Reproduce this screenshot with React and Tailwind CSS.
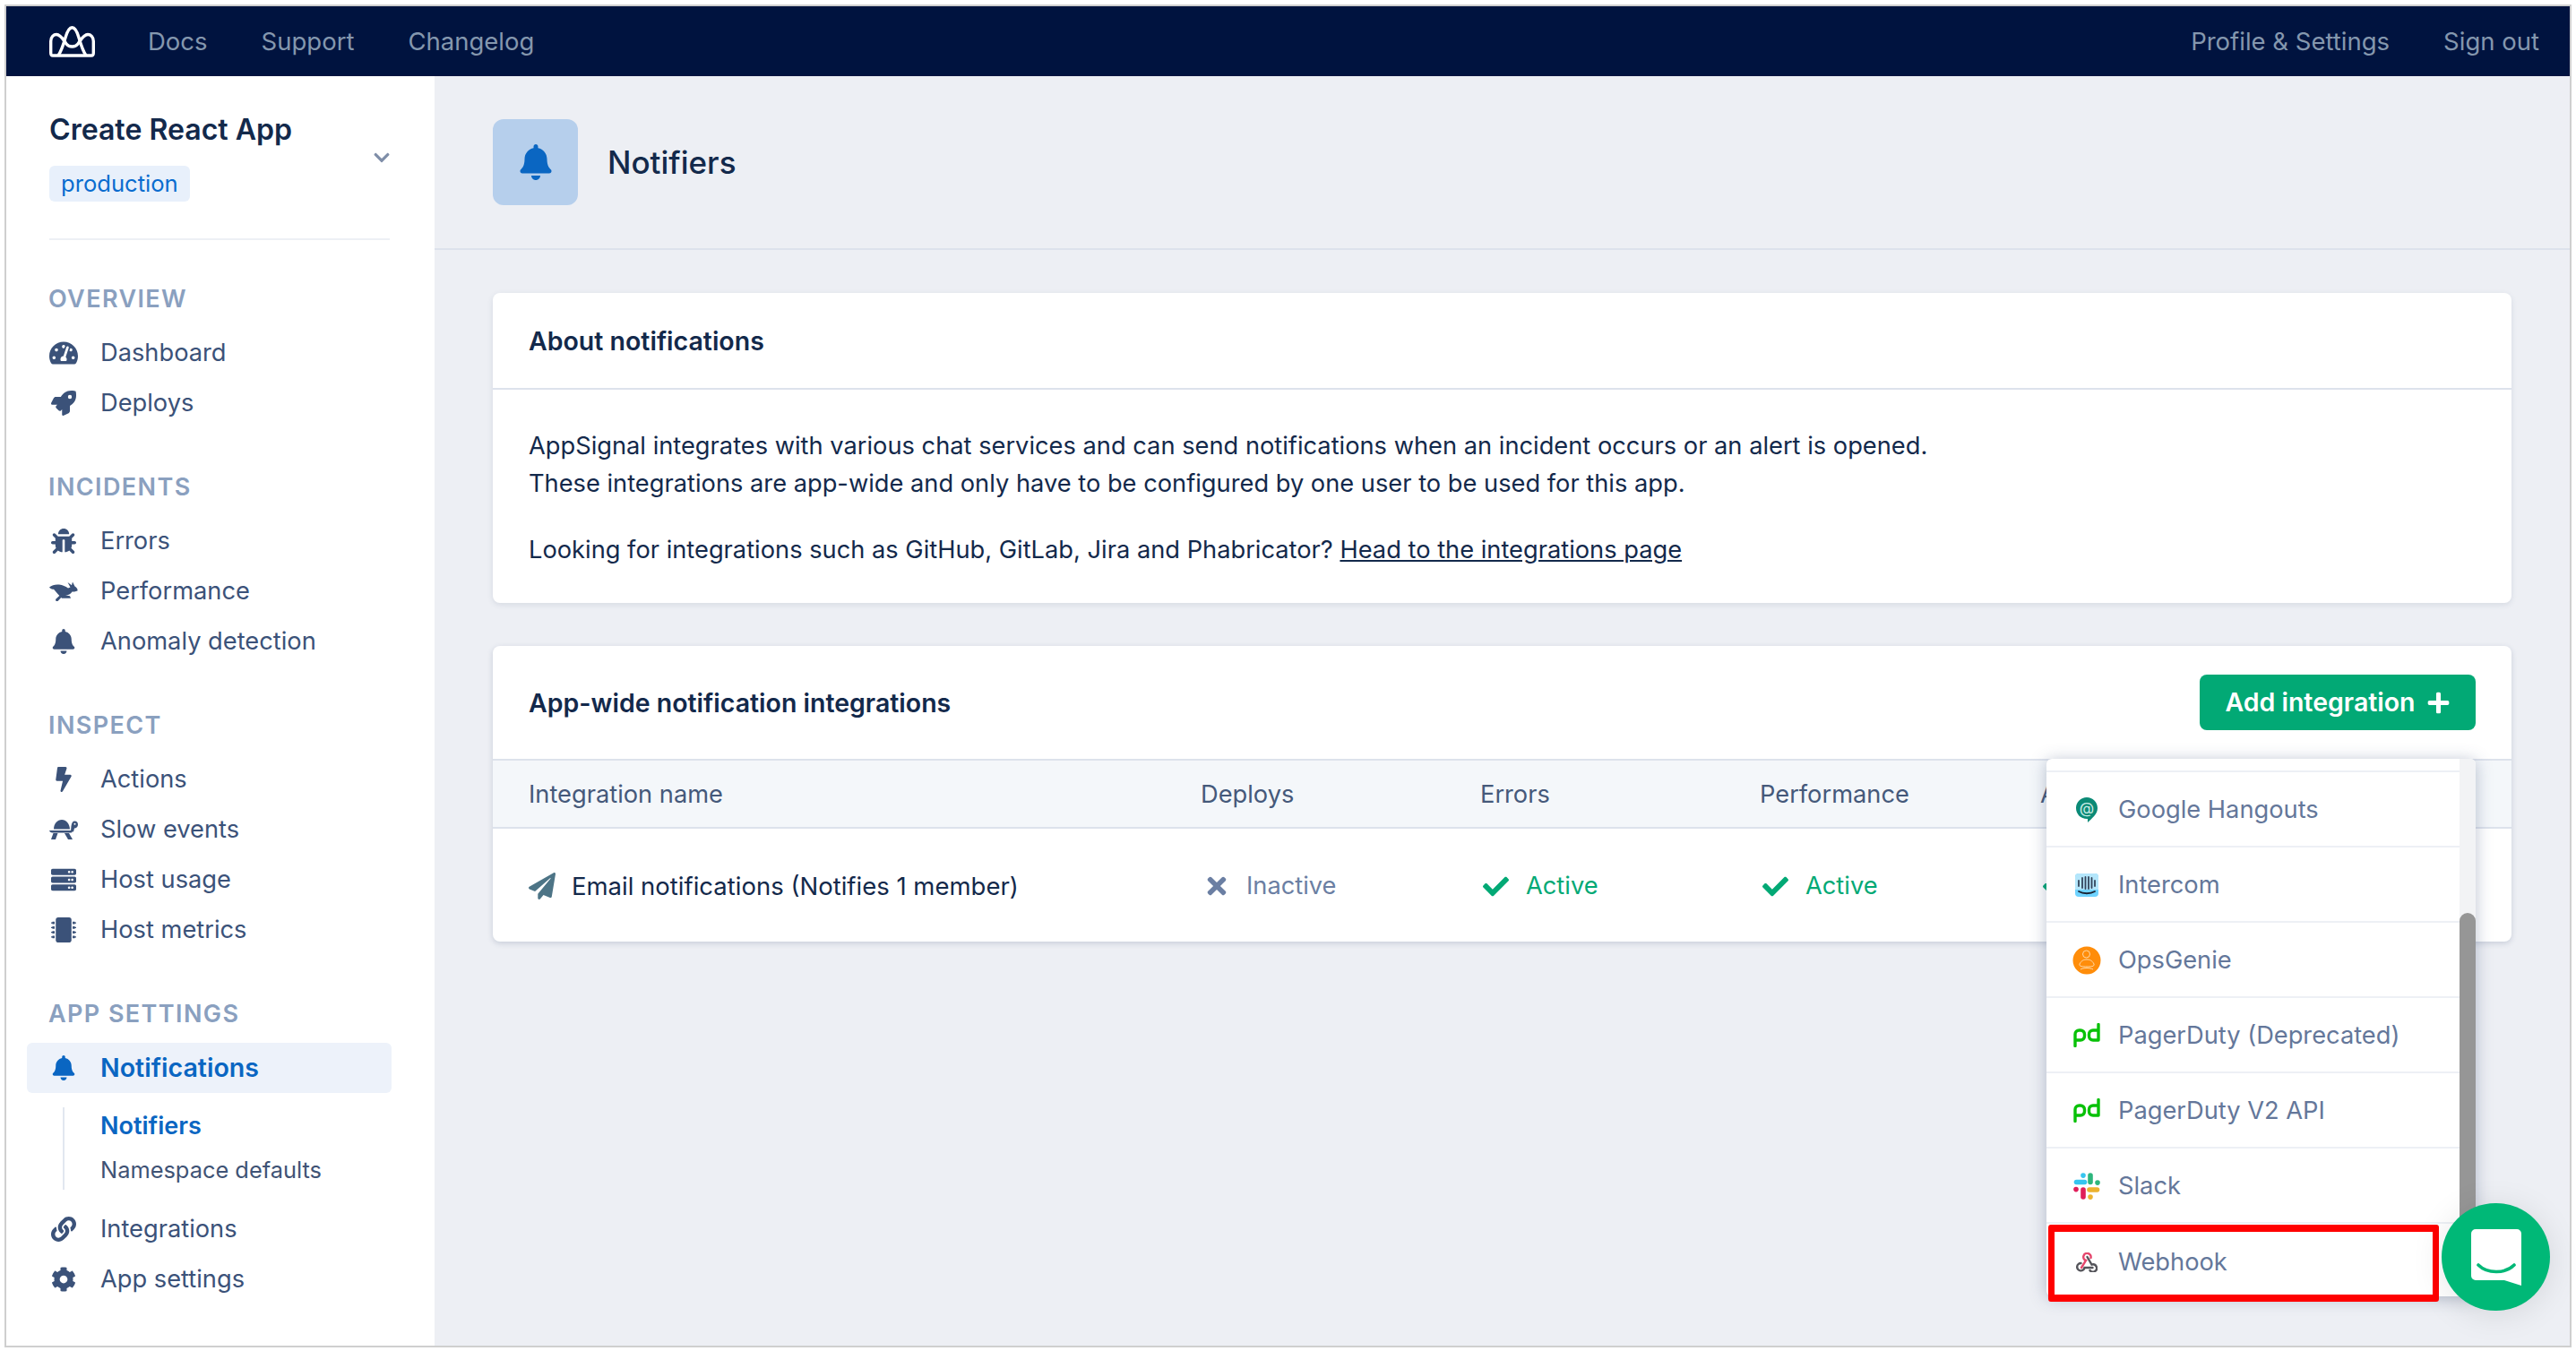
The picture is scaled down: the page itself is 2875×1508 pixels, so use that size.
import React from "react";
import {
  FaTachometerAlt, FaRocket, FaBug, FaBell, FaBolt, FaServer, FaMicrochip, FaLink, FaCog,
  FaChevronDown, FaCheck, FaTimes, FaPlus, FaPaperPlane,
} from "react-icons/fa";

const Logo = () => (
  <svg width="51" height="35" viewBox="0 0 51 35" fill="none" stroke="#fff" strokeWidth="3.4" strokeLinejoin="round">
    <path d="M4 33C2 33 1.7 32 1.7 30L1.7 17C1.7 12 5 9.5 8 9.5C13 9.5 16 16 19 20C22 24 29 24 32 20C35 16 38 9.5 43 9.5C46 9.5 49.3 12 49.3 17L49.3 30C49.3 32 49 33 47 33Z" />
    <path d="M10 33C14 27 16 20 18 13C20 6 22 1.7 25.5 1.7C29 1.7 31 6 33 13C35 20 37 27 41 33" />
  </svg>
);

const Rabbit = () => (
  <svg width="32" height="22" viewBox="0 0 32 22" fill="currentColor">
    <path d="M0 6.5C3 4 7 3 11 3.5C15 4 18 5.5 21 7.5L23.5 6.5L20.5 1L25 4.2L26 0.5L28.5 5.5C30.5 6.5 32 8.5 31.5 10.5C29 11.5 27 11.5 25.5 11.5C24 14 21 15.5 18 15.5L23 16.2L24 18.8L14 18.8L9.5 14L5 8.8C3 8.8 1 8.2 0 6.5Z" />
    <path d="M7 20L11.5 15.8L13.5 17.8L9.5 22L7.5 22Z" />
  </svg>
);

const Turtle = () => (
  <svg width="32" height="22" viewBox="0 0 32 22" fill="currentColor">
    <path d="M5 10.5C5 4.5 9 0 14 0C19 0 22.5 4.5 23 10.5Z" />
    <path d="M0 12H25.5C26 12 26 14.5 24.5 14.5H3.5C1.5 14.5 0.5 13.5 0 12Z" />
    <path d="M4.5 15H9.5L7 22H2Z" />
    <path d="M17 15H22L26 22H21Z" />
    <path fillRule="evenodd" d="M24 12.5L24.5 7C25 3.5 26 1.5 28.5 1.5C30.5 1.5 32 3 32 5.2C32 7.5 30.5 9.5 28 9.5L27 13.5ZM28.5 3.8A1 1 0 1 0 28.5 5.8A1 1 0 1 0 28.5 3.8Z" />
  </svg>
);

const Hangouts = () => (
  <svg width="26" height="30" viewBox="0 0 26 30">
    <path d="M13 1C19.5 1 25 6 25 13C25 20 19 24 14 29V25H13C6.5 25 1 20 1 13C1 6 6.5 1 13 1Z" fill="#0b8a76" />
    <text x="13" y="18.5" textAnchor="middle" fontSize="17" fontFamily="Inter, sans-serif" fill="#c9ece6">@</text>
  </svg>
);

const Intercom = () => (
  <svg width="26" height="26" viewBox="0 0 26 26">
    <rect width="26" height="26" rx="4" fill="#6fd3ff" />
    <path d="M4 0H22A4 4 0 0 1 26 4V18H0V4A4 4 0 0 1 4 0Z" fill="#b4e6fb" />
    <g stroke="#33445a" strokeWidth="1.8" strokeLinecap="round">
      <path d="M4 8V14" /><path d="M8 5V16" /><path d="M11.5 4V17" /><path d="M15 4V17" /><path d="M18.5 5V16" /><path d="M22 8V14" />
    </g>
    <path d="M4 20C9 23 17 23 22 20" stroke="#1a2433" strokeWidth="1.8" fill="none" strokeLinecap="round" />
  </svg>
);

const OpsGenie = () => (
  <svg width="32" height="32" viewBox="0 0 32 32">
    <circle cx="16" cy="16" r="15.5" fill="#ff8d0a" />
    <g stroke="#ffd9a6" strokeWidth="1" fill="none">
      <circle cx="15.5" cy="9" r="4" />
      <path d="M8 20C10 16 13 15 16 15C19 15 22 16 24 20C25 23 20 23 16 23C12 23 7 23 8 20Z" />
      <path d="M9 26C12 24 20 24 23 26" />
    </g>
  </svg>
);

const Pd = () => (
  <svg width="30" height="27" viewBox="0 0 30 27" fill="none" stroke="#08c108" strokeWidth="3.4" strokeLinecap="round" strokeLinejoin="round">
    <path d="M2 25.5V12.5A4.5 4.5 0 0 1 6.5 8H8A4.5 4.5 0 0 1 12.5 12.5V14.5A4.5 4.5 0 0 1 8 19H2" />
    <path d="M28 1.5V19H22A4.5 4.5 0 0 1 17.5 14.5V12.5A4.5 4.5 0 0 1 22 8H28" />
  </svg>
);

const Slack = () => (
  <svg width="30" height="30" viewBox="0 0 30 30" fill="none" strokeWidth="5.6" strokeLinecap="round">
    <path d="M3.5 10.5H12.5" stroke="#36c5f0" />
    <path d="M11 3V3.1" stroke="#36c5f0" />
    <path d="M19 3V10.5" stroke="#2eb67d" />
    <path d="M27 11V11.1" stroke="#2eb67d" />
    <path d="M3 18.5V18.6" stroke="#e01e5a" />
    <path d="M11 19V27" stroke="#e01e5a" />
    <path d="M18 19H26.5" stroke="#ecb22e" />
    <path d="M19 27V27.1" stroke="#ecb22e" />
  </svg>
);

const Webhook = () => (
  <svg width="24" height="22" viewBox="0 0 24 22" fill="none" strokeWidth="2.4" strokeLinecap="round">
    <path d="M6 17L11 9A4.2 4.2 0 1 1 16.5 6" stroke="#e5476d" />
    <path d="M12.5 5L17.5 13.5A4.2 4.2 0 1 1 15.5 20" stroke="#55555b" />
    <path d="M18.5 17H9.5A4.2 4.2 0 1 1 5.5 12" stroke="#55555b" />
  </svg>
);

const ChatIcon = () => (
  <svg width="56" height="63" viewBox="0 0 56 63">
    <path d="M5 0H51A5 5 0 0 1 56 5V63L37 57H5A5 5 0 0 1 0 52V5A5 5 0 0 1 5 0Z" fill="#fff" />
    <path d="M8 40C18 50 38 50 48 40" stroke="#00b877" strokeWidth="3.6" strokeLinecap="round" fill="none" />
  </svg>
);

function NavItem({ icon, label, active }) {
  return (
    <div
      className={
        active
          ? "flex h-[56px] w-[407px] -ml-[25px] pl-[25px] items-center rounded-[6px] bg-[#edf2fa] text-[28.6px] font-semibold text-[#0a66c2]"
          : "flex h-[56px] items-center text-[#3b5279]"
      }
    >
      <span className="flex w-[32px] justify-center">{icon}</span>
      <span className="ml-[25px]">{label}</span>
    </div>
  );
}

function Section({ title, children }) {
  return (
    <div className="mt-[50px]">
      <div className="mb-[16px] -ml-[1px] h-[32px] text-[27px] leading-[32px] font-semibold tracking-[1.4px] text-[#8aa0bf]">{title}</div>
      {children}
    </div>
  );
}

function Status({ active, label }) {
  return (
    <div className={active ? "flex items-center text-[#02a975]" : "flex items-center text-[#6b7fa3]"}>
      <span className="flex w-[35px] justify-center">
        {active ? <FaCheck size={29} /> : <FaTimes size={30} />}
      </span>
      {label ? <span className="ml-[16px]">{label}</span> : null}
    </div>
  );
}

const items = [
  [<Hangouts />, "Google Hangouts"],
  [<Intercom />, "Intercom"],
  [<OpsGenie />, "OpsGenie"],
  [<Pd />, "PagerDuty (Deprecated)"],
  [<Pd />, "PagerDuty V2 API"],
  [<Slack />, "Slack"],
  [<Webhook />, "Webhook"],
];

export default function App() {
  return (
    <div className="relative h-[1508px] w-[2875px] overflow-hidden bg-white pt-[5px] pl-[5px] [font-family:Inter,sans-serif] text-[27.25px] leading-[42px]">
      <div className="flex h-[1499px] w-[2865px] flex-col border-2 border-[#cfcfcf] bg-[#edeff4]">
        <header className="flex h-[78px] shrink-0 items-center bg-[#00133f] pr-[34px] pl-[48px] text-[27.5px] text-[#8497ae]">
          <Logo />
          <nav className="ml-[59px] flex gap-[60px]">
            <span>Docs</span>
            <span>Support</span>
            <span>Changelog</span>
          </nav>
          <div className="ml-auto flex gap-[60px]">
            <span>Profile &amp; Settings</span>
            <span>Sign out</span>
          </div>
        </header>

        <div className="flex min-h-0 flex-1">
          <aside className="w-[478px] shrink-0 bg-white px-[48px] pt-[40px]">
            <div className="flex w-[381px] items-center justify-between">
              <div>
                <div className="text-[32.1px] leading-[40px] font-semibold text-[#13294b]">Create React App</div>
                <div className="mt-[20px] inline-block h-[40px] rounded-[6px] bg-[#e8f0fb] px-[13px] text-[25.6px] leading-[40px] text-[#0a6ccf]">production</div>
              </div>
              <FaChevronDown size={20} className="text-[#7f8ea8]" />
            </div>
            <div className="mt-[40px] h-[2px] w-[380px] bg-[#edf0f5]" />

            <Section title="OVERVIEW">
              <NavItem icon={<FaTachometerAlt size={32} />} label="Dashboard" />
              <NavItem icon={<FaRocket size={28} />} label="Deploys" />
            </Section>
            <Section title="INCIDENTS">
              <NavItem icon={<FaBug size={28} />} label="Errors" />
              <NavItem icon={<Rabbit />} label="Performance" />
              <NavItem icon={<FaBell size={28} />} label="Anomaly detection" />
            </Section>
            <Section title="INSPECT">
              <NavItem icon={<FaBolt size={28} />} label="Actions" />
              <NavItem icon={<Turtle />} label="Slow events" />
              <NavItem icon={<FaServer size={28} />} label="Host usage" />
              <NavItem icon={<FaMicrochip size={28} />} label="Host metrics" />
            </Section>
            <Section title="APP SETTINGS">
              <NavItem active icon={<FaBell size={28} />} label="Notifications" />
              <div className="mt-[16px] ml-[15px] flex flex-col gap-[8px] border-l-2 border-[#e2e7f0] pl-[40px]">
                <div className="h-[42px] text-[27px] font-semibold text-[#0a66c2]">Notifiers</div>
                <div className="h-[42px] text-[25.4px] leading-[40px] text-[#3f5375]">Namespace defaults</div>
              </div>
              <div className="mt-[16px]">
                <NavItem icon={<FaLink size={28} />} label="Integrations" />
                <NavItem icon={<FaCog size={28} />} label="App settings" />
              </div>
            </Section>
          </aside>

          <main className="min-w-0 flex-1">
            <div className="flex h-[194px] items-center border-b-2 border-[#dde2ec] pl-[65px]">
              <div className="flex h-[96px] w-[95px] items-center justify-center rounded-[12px] bg-[#b6cfec]">
                <FaBell size={40} className="text-[#0a66c2]" />
              </div>
              <h1 className="ml-[33px] text-[35px] font-medium text-[#13294b]">Notifiers</h1>
            </div>

            <div className="px-[65px] pt-[48px] text-[#13294b]">
              <section className="rounded-[8px] bg-white shadow-[0_2px_6px_rgba(50,70,110,0.12)]">
                <div className="flex h-[108px] items-center border-b-2 border-[#dde2ec] px-[40px] pt-[1px] text-[28.5px] font-semibold">About notifications</div>
                <div className="px-[40px] pt-[42px] pb-[38px]">
                  <p>AppSignal integrates with various chat services and can send notifications when an incident occurs or an alert is opened.</p>
                  <p>These integrations are app-wide and only have to be configured by one user to be used for this app.</p>
                  <p className="mt-[32px]">
                    Looking for integrations such as GitHub, GitLab, Jira and Phabricator? <a className="underline">Head to the integrations page</a>
                  </p>
                </div>
              </section>

              <section className="relative mt-[48px] rounded-[8px] bg-white shadow-[0_2px_6px_rgba(50,70,110,0.2)]">
                <div className="flex h-[128px] items-center justify-between border-b-2 border-[#dde2ec] pr-[40px] pl-[40px] text-[28.5px] font-semibold">
                  <span className="pt-[1px]">App-wide notification integrations</span>
                  <button className="flex h-[62px] w-[308px] items-center justify-center gap-[12px] rounded-[8px] bg-[#02a975] text-white">
                    Add integration
                    <FaPlus size={27} />
                  </button>
                </div>
                <div className="grid h-[76px] grid-cols-[750px_312px_312px_313px_1fr] items-center border-b-2 border-[#dde2ec] bg-[#f4f7fa] pt-[1px] pl-[40px] text-[#45597a]">
                  <span>Integration name</span>
                  <span>Deploys</span>
                  <span>Errors</span>
                  <span>Performance</span>
                  <span className="block w-[7px] overflow-hidden">A</span>
                </div>
                <div className="grid h-[126px] grid-cols-[750px_312px_312px_313px_1fr] items-center pt-[2px] pl-[40px]">
                  <div className="flex items-center">
                    <FaPaperPlane size={30} className="text-[#4d7486]" />
                    <span className="ml-[18px] text-[27.5px]">Email notifications (Notifies 1 member)</span>
                  </div>
                  <Status label="Inactive" />
                  <Status active label="Active" />
                  <Status active label="Active" />
                  <Status active />
                </div>

                <div className="absolute top-[126px] right-[40px] flex h-[600px] w-[479px] overflow-hidden rounded-[6px] bg-white text-[#64779a] shadow-[0_2px_18px_rgba(60,80,120,0.35)]">
                  <div className="min-w-0 flex-1">
                    <div className="h-[15px] border-b-2 border-[#edf0f5]" />
                    {items.map(([icon, label]) => (
                      <div key={label} className="flex h-[84px] items-center border-b-2 border-[#edf0f5] pt-[1px] pl-[24px] last:border-b-0">
                        <span className="flex w-[42px] justify-center">{icon}</span>
                        <span className="ml-[14px]">{label}</span>
                      </div>
                    ))}
                  </div>
                  <div className="flex w-[18px] flex-col bg-[#f2f3f5] pt-[172px]">
                    <div className="flex-1 rounded-full bg-[#969696]" />
                  </div>
                </div>
              </section>
            </div>
          </main>
        </div>
      </div>

      <div className="absolute top-[1367px] left-[2286px] h-[86px] w-[436px] rounded-[3px] border-x-[7px] border-y-[8px] border-[#ff0000]" />
      <div className="absolute top-[1343px] left-[2725px] flex h-[120px] w-[121px] items-center justify-center rounded-full bg-[#00b877] shadow-[0_4px_36px_rgba(0,0,0,0.1)]">
        <ChatIcon />
      </div>
    </div>
  );
}
